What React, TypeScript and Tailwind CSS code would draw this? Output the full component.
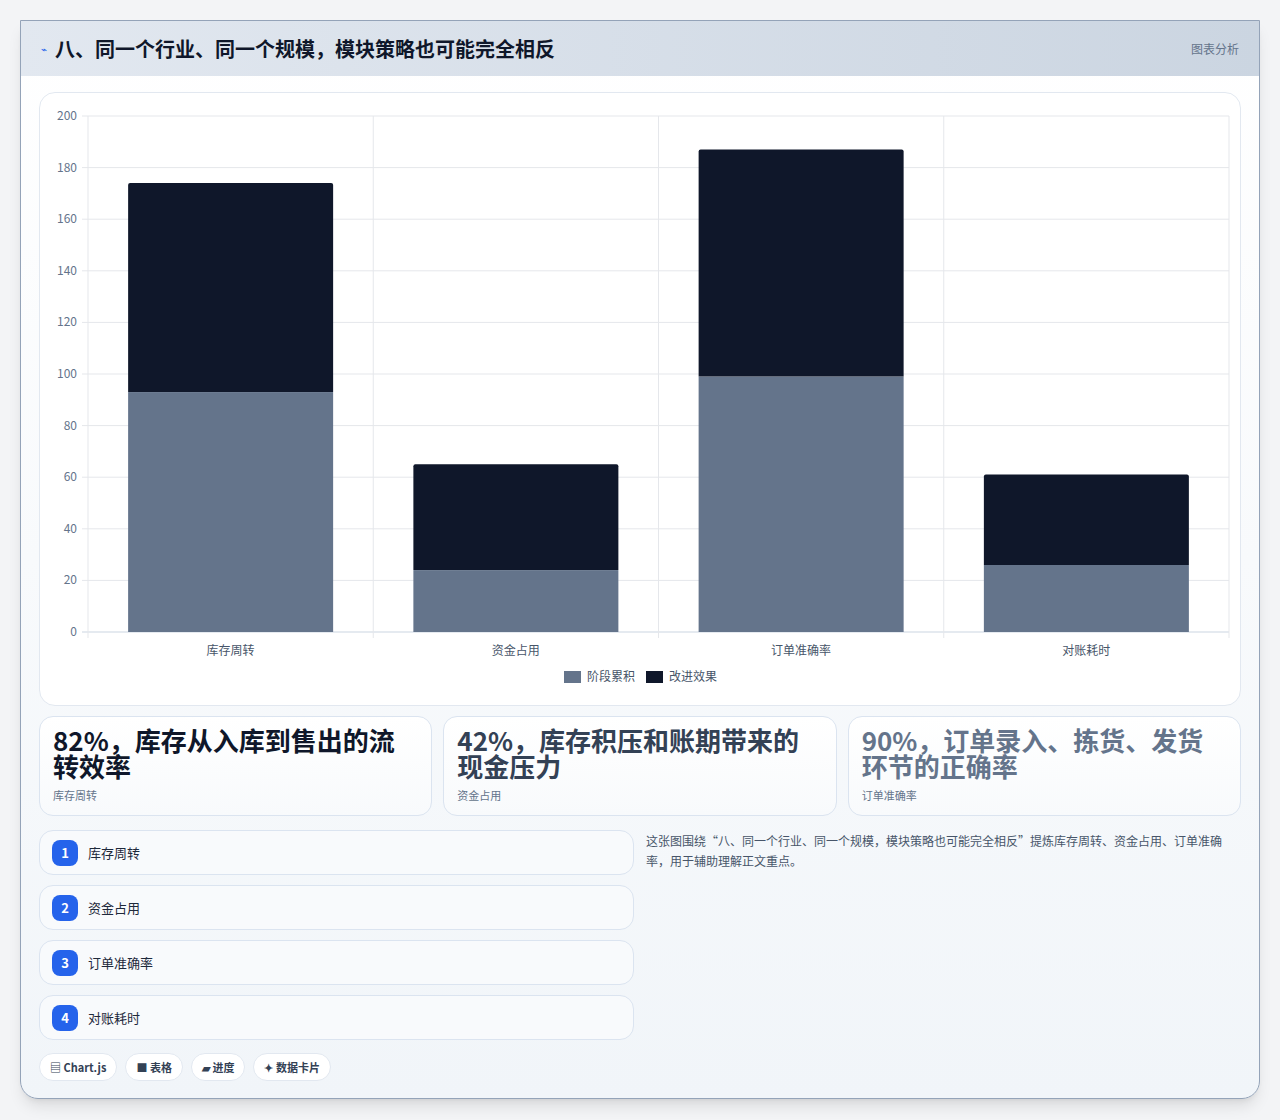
const F = { fontFamily: '"Noto Sans CJK SC","Noto Sans",sans-serif' };

const cats = ["库存周转", "资金占用", "订单准确率", "对账耗时"];
const a = [93, 24, 99, 26];
const b = [81, 41, 88, 35];

function Chart() {
  const W = 1200, H = 612;
  const x0 = 48, x1 = 1189, y0 = 539, yTop = 23;
  const sc = (y0 - yTop) / 200;
  const cw = (x1 - x0) / 4;
  const bw = 205;
  return (
    <svg width={W} height={H} className="block">
      {[0, 20, 40, 60, 80, 100, 120, 140, 160, 180, 200].map((v) => {
        const y = y0 - v * sc;
        return (
          <g key={v}>
            <line x1={x0 - 6} x2={x1} y1={y} y2={y} stroke={v === 0 ? "#cbd5e1" : "#e5e7eb"} />
            <text x={37} y={y + 4} textAnchor="end" fontSize="12" fill="#64748b" style={F}>{v}</text>
          </g>
        );
      })}
      {[0, 1, 2, 3, 4].map((i) => (
        <line key={i} x1={x0 + i * cw} x2={x0 + i * cw} y1={yTop} y2={y0 + 6} stroke="#e5e7eb" />
      ))}
      {cats.map((c, i) => {
        const cx = x0 + cw * i + cw / 2;
        const ha = a[i] * sc, hb = b[i] * sc;
        return (
          <g key={c}>
            <rect x={cx - bw / 2} y={y0 - ha} width={bw} height={ha} fill="#64748b" />
            <path d={`M${cx - bw / 2} ${y0 - ha} V${y0 - ha - hb + 2} q0 -2 2 -2 H${cx + bw / 2 - 2} q2 0 2 2 V${y0 - ha} Z`} fill="#0f172a" />
            <text x={cx} y={y0 + 23} textAnchor="middle" fontSize="12" fill="#475569" style={F}>{c}</text>
          </g>
        );
      })}
      <rect x={524} y={578} width={17} height={12} fill="#64748b" />
      <text x={547} y={588} fontSize="12" fill="#475569" style={F}>阶段累积</text>
      <rect x={606} y={578} width={17} height={12} fill="#0f172a" />
      <text x={629} y={588} fontSize="12" fill="#475569" style={F}>改进效果</text>
    </svg>
  );
}

export default function App() {
  const stats = [
    ["82%，库存从入库到售出的流转效率", "库存周转", "text-[#0f172a]"],
    ["42%，库存积压和账期带来的现金压力", "资金占用", "text-[#334155]"],
    ["90%，订单录入、拣货、发货环节的正确率", "订单准确率", "text-[#64748b]"],
  ];
  return (
    <div className="min-h-[1120px] bg-[#f3f4f6] pt-5 px-5" style={F}>
      <div className="w-[1240px] rounded-b-[18px] border border-[#94a3b8] overflow-hidden shadow-lg bg-gradient-to-b from-white to-[#f1f5f9]">
        <div className="h-[55px] flex items-center justify-between px-5 bg-gradient-to-r from-[#e2e8f0] to-[#cbd5e1]">
          <div className="flex items-center gap-2">
            <span className="text-[#2563eb] text-[10px]">⌁</span>
            <span className="text-[20px] font-bold text-[#0f172a]">八、同一个行业、同一个规模，模块策略也可能完全相反</span>
          </div>
          <span className="text-[12px] text-[#64748b]">图表分析</span>
        </div>
        <div className="px-[18px] pt-[16px] pb-[17px]">
          <div className="h-[614px] rounded-[16px] border border-[#e2e8f0] bg-white overflow-hidden">
            <Chart />
          </div>
          <div className="grid grid-cols-3 gap-[11px] mt-[10px]">
            {stats.map(([t, s, c]) => (
              <div key={s} className="h-[100px] rounded-[14px] border border-[#dbe4f0] bg-gradient-to-b from-white to-[#f8fafc] px-[13px] pt-[10px]">
                <div className={`text-[26px] leading-[26px] font-bold ${c}`}>{t}</div>
                <div className="text-[11px] text-[#64748b] mt-[8px]">{s}</div>
              </div>
            ))}
          </div>
          <div className="flex gap-[12px] mt-[14px]">
            <div className="w-[595px] flex flex-col gap-[10px]">
              {cats.map((c, i) => (
                <div key={c} className="h-[45px] rounded-[14px] border border-[#dbe4f0] bg-[#f8fafc] flex items-center px-[12px] gap-[10px]">
                  <span className="w-[26px] h-[26px] rounded-[8px] bg-[#2563eb] text-white text-[13px] font-bold flex items-center justify-center">{i + 1}</span>
                  <span className="text-[13px] text-[#1e293b]">{c}</span>
                </div>
              ))}
            </div>
            <div className="flex-1 text-[12px] leading-[20px] text-[#475569] pt-[1px]">
              这张图围绕“八、同一个行业、同一个规模，模块策略也可能完全相反”提炼库存周转、资金占用、订单准确率，用于辅助理解正文重点。
            </div>
          </div>
          <div className="flex gap-[8px] mt-[13px]">
            {["▤ Chart.js", "■ 表格", "▰ 进度", "✦ 数据卡片"].map((t) => (
              <span key={t} className="h-[28px] px-[10px] rounded-full border border-[#e2e8f0] bg-white text-[11px] font-bold text-[#334155] flex items-center">{t}</span>
            ))}
          </div>
        </div>
      </div>
    </div>
  );
}
